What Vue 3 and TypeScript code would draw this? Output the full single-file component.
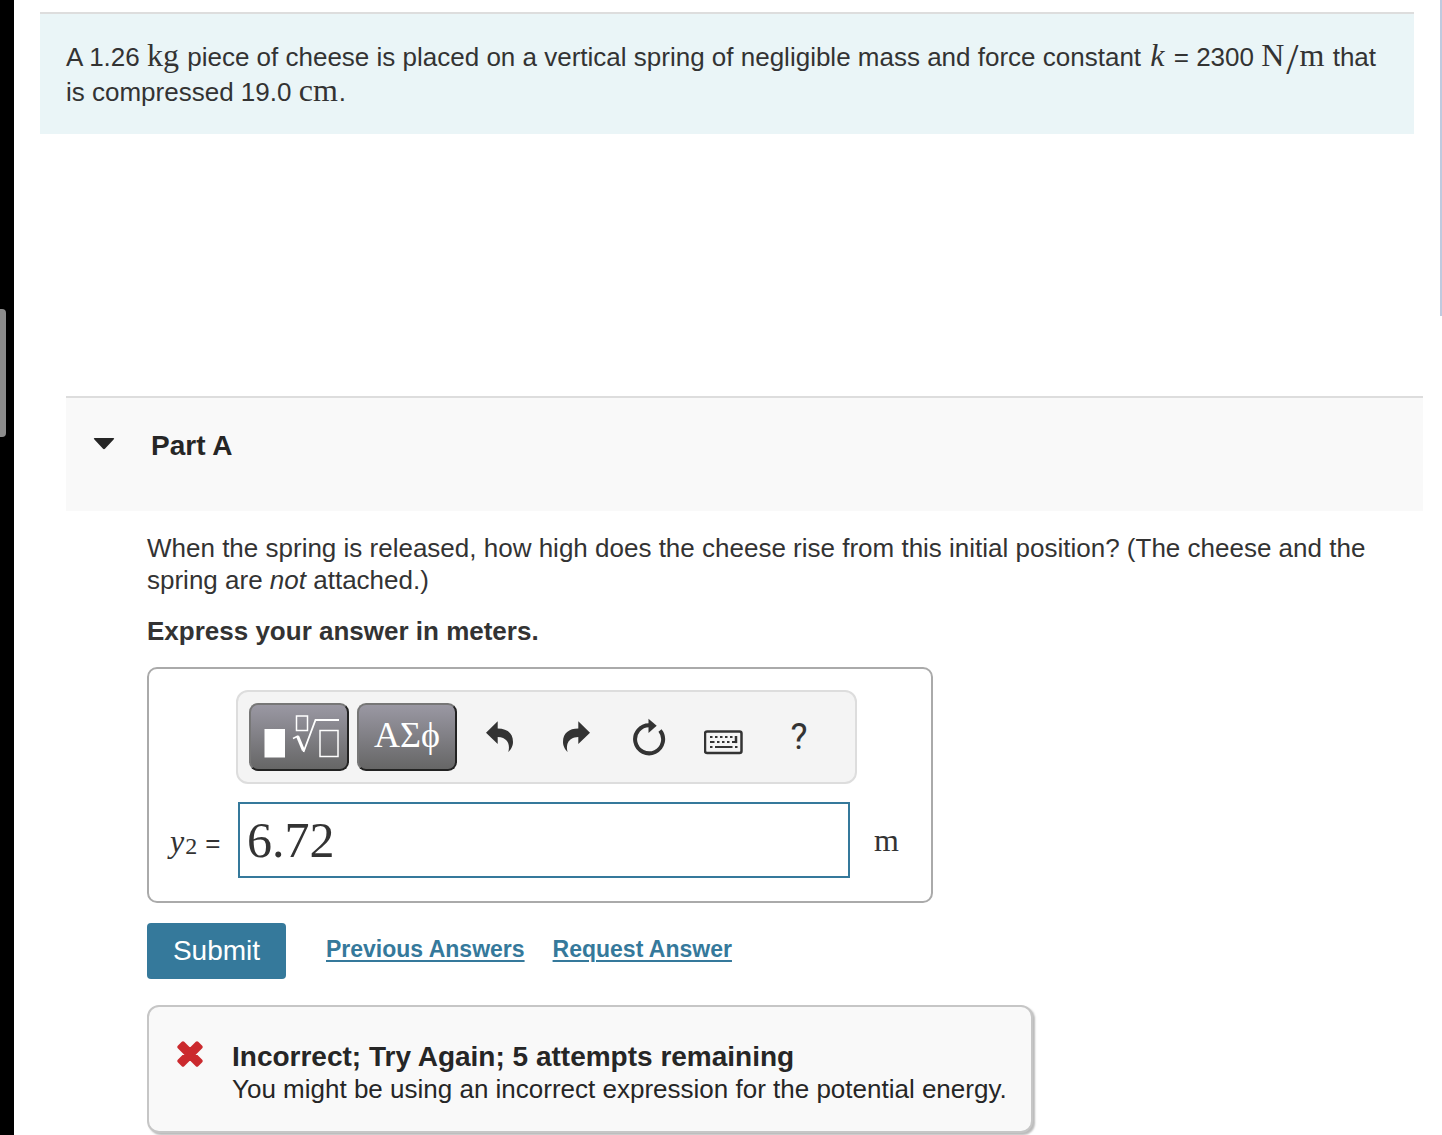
<script setup lang="ts">
import { ref } from 'vue'

const answer = ref('6.72')
const open = ref(true)
</script>

<template>
  <div class="shell">
    <div class="rail"><span class="thumb"></span></div>

    <main class="page">
      <section class="problem">
        <p>
          A 1.26 <span class="math">kg</span> piece of cheese is placed on a vertical spring of negligible mass and
          force constant <i class="math">k</i> = 2300 <span class="math">N<span class="slash">/</span>m</span> that is
          compressed 19.0 <span class="math">cm</span>.
        </p>
      </section>

      <section class="part">
        <header class="part-head">
          <button type="button" class="toggle" aria-label="Toggle Part A" :aria-expanded="open" @click="open = !open">
            <svg width="22" height="14" viewBox="0 0 22 14">
              <path d="M2 1H20Q22 1 20.600 2.400L12.200 11.600Q11 12.800 9.800 11.600L1.400 2.400Q0 1 2 1Z" fill="#262626" />
            </svg>
          </button>
          <h2>Part A</h2>
        </header>

        <div v-if="open" class="part-body">
          <p class="question">
            When the spring is released, how high does the cheese rise from this initial position? (The cheese and the
            spring are <em>not</em> attached.)
          </p>
          <p class="express">Express your answer in meters.</p>

          <form class="answer-box" @submit.prevent>
            <div class="toolbar">
              <button type="button" class="key" aria-label="Templates">
                <svg width="80" height="44" viewBox="0 0 80 44" fill="none" stroke="#fff">
                  <rect x="5.500" y="14" width="20.500" height="28.500" fill="#fff" stroke="none" />
                  <rect x="37.500" y="1" width="11" height="14.500" stroke-width="1.500" />
                  <path d="M34 23.500L39 21" stroke-width="1.500" />
                  <path d="M38.500 21L44.500 35.500" stroke-width="3.200" />
                  <path d="M44.500 37L56.500 5H80" stroke-width="1.800" />
                  <rect x="61" y="15.500" width="18" height="26" stroke-width="1.500" />
                </svg>
              </button>
              <button type="button" class="key greek">ΑΣϕ</button>
              <div class="tools">
                <button type="button" aria-label="Undo">
                  <svg width="40" height="40" viewBox="0 0 40 40">
                    <path d="M7 15.700L18.700 4.300V11.500C28 11.500 34 16 34 25C34 29.500 31.500 33 29.300 35C31 29 30 20.500 18.700 20V27Z" fill="#333" />
                  </svg>
                </button>
                <button type="button" aria-label="Redo">
                  <svg width="40" height="40" viewBox="0 0 40 40">
                    <path d="M36 15.700L24.300 4.300V11.500C15 11.500 9 16 9 25C9 29.500 11.500 33 13.700 35C12 29 13 20.500 24.300 20V27Z" fill="#333" />
                  </svg>
                </button>
                <button type="button" aria-label="Reset">
                  <svg width="40" height="40" viewBox="0 0 40 40">
                    <path d="M20.500 8.300A14 14 0 1 0 31 13.500" fill="none" stroke="#333" stroke-width="4" />
                    <path d="M19.500 1.700L27.700 8.700L19.500 16Z" fill="#333" />
                  </svg>
                </button>
                <button type="button" aria-label="Keyboard shortcuts">
                  <svg width="40" height="40" viewBox="0 0 40 40" fill="none" stroke="#333">
                    <rect x="1" y="14.500" width="36.500" height="21.500" rx="2" stroke-width="2.500" />
                    <path d="M6 20h2.500m2.500 0h2.500m2.500 0h2.500m2.500 0h2.500m2.500 0h2.500" stroke-width="2.200" />
                    <path d="M6 25h4.500m2.500 0h2.500m2.500 0h2.500m2.500 0h2.500m2.500 0h5" stroke-width="2.200" />
                    <path d="M32 19v7.100" stroke-width="2.500" />
                    <path d="M6 30h2.500m2.500 0h17.500m2.500 0h2.500" stroke-width="2.200" />
                  </svg>
                </button>
                <button type="button" class="help" aria-label="Help">?</button>
              </div>
            </div>

            <div class="entry">
              <label for="answer"><i>y</i><span class="index">2</span> <span class="equals">=</span></label>
              <input id="answer" v-model="answer" type="text" autocomplete="off" spellcheck="false" />
              <span class="unit">m</span>
            </div>
          </form>

          <div class="actions">
            <button type="button" class="submit">Submit</button>
            <a href="#previous">Previous Answers</a>
            <a href="#request">Request Answer</a>
          </div>

          <div class="feedback" role="status">
            <svg width="28" height="28" viewBox="0 0 28 28" aria-hidden="true">
              <path d="M3 7L7 3L14 10L21 3L25 7L18 14L25 21L21 25L14 18L7 25L3 21L10 14Z" fill="#cb2a2e" stroke="#cb2a2e" stroke-width="3.500" stroke-linejoin="round" />
            </svg>
            <div>
              <h3>Incorrect; Try Again; 5 attempts remaining</h3>
              <p>You might be using an incorrect expression for the potential energy.</p>
            </div>
          </div>
        </div>
      </section>
    </main>

    <div class="edge"></div>
  </div>
</template>

<style>
body {
  background: #fff;
}
</style>

<style scoped>
.shell {
  display: flex;
  min-height: 100vh;
  color: #333;
  font: 26px/32px "Liberation Sans", Arial, sans-serif;
}
p,
h2,
h3 {
  margin: 0;
}
button {
  display: flex;
  align-items: center;
  justify-content: center;
  box-sizing: border-box;
  padding: 0;
  border: 0;
  background: none;
  color: inherit;
}
.rail {
  flex: 0 0 14px;
  background: #000;
}
.thumb {
  display: block;
  width: 6px;
  height: 128px;
  margin-top: 309px;
  border-radius: 0 4px 4px 0;
  background: #8c8c8c;
}
.page {
  flex: 1;
  min-width: 0;
  padding-top: 12px;
}
.edge {
  flex: 0 0 2px;
  height: 316px;
  background: #bfcadf;
}
.problem {
  margin: 0 26px;
  padding: 26px 26px 24px;
  border-top: 2px solid #ddd;
  background: #eaf5f7;
  line-height: 35px;
}
.math {
  margin-right: 1px;
  font-family: "Liberation Serif", "Times New Roman", serif;
  font-size: 32px;
  line-height: 30px;
}
i.math {
  margin: 0 2px;
}
.slash {
  margin: 0 1px 0 2px;
  font-size: 44px;
  line-height: 20px;
  vertical-align: -8px;
}
.part {
  margin: 262px 17px 0 52px;
}
.part-head {
  display: flex;
  align-items: flex-start;
  gap: 36px;
  padding: 32px 27px 49px;
  border-top: 2px solid #ddd;
  background: #f9f9f9;
  color: #262626;
}
.toggle {
  height: 28px;
}
.part-head h2 {
  font-size: 28px;
  line-height: 32px;
}
.part-body {
  padding: 21px 32px 0 81px;
}
.express {
  margin-top: 19px;
  font-weight: bold;
}
.answer-box {
  box-sizing: border-box;
  width: 786px;
  max-width: 100%;
  margin-top: 20px;
  padding: 21px 0 23px;
  border: 2px solid #aaa;
  border-radius: 10px;
}
.toolbar {
  display: flex;
  align-items: center;
  gap: 8px;
  box-sizing: border-box;
  width: 621px;
  height: 94px;
  margin-left: 87px;
  padding: 0 11px;
  border: 2px solid #ddd;
  border-radius: 12px;
  background: #f4f4f4;
}
.key {
  width: 100px;
  height: 68px;
  border: 2px solid;
  border-color: #777 #222 #222 #777;
  border-radius: 9px;
  background: linear-gradient(#9a98a3, #666);
  color: #fff;
}
.key svg {
  flex: none;
}
.greek {
  padding-bottom: 4px;
  font: 36px/40px "Liberation Serif", serif;
}
.tools {
  display: flex;
  gap: 35px;
  margin-left: 14px;
}
.tools button {
  width: 40px;
  height: 40px;
}
.tools .help {
  font: 36px/40px Roboto, sans-serif;
}
.entry {
  display: flex;
  align-items: center;
  margin-top: 18px;
}
.entry label {
  width: 68px;
  padding: 2px 0 0 21px;
  font: 32px/40px "Liberation Serif", serif;
  white-space: nowrap;
}
.index {
  margin-left: 1px;
  font-size: 24px;
  line-height: 24px;
  vertical-align: -2px;
}
.equals {
  font: 26px/32px "Liberation Sans", sans-serif;
}
.entry input {
  box-sizing: border-box;
  width: 612px;
  height: 76px;
  padding: 0 7px;
  border: 2px solid #35799b;
  border-radius: 0;
  outline: 0;
  background: #fff;
  color: #333;
  font: 50px/72px "Liberation Serif", serif;
}
.unit {
  margin-left: 24px;
  font: 32px/40px "Liberation Serif", serif;
}
.actions {
  display: flex;
  align-items: center;
  gap: 28px;
  margin-top: 20px;
}
.submit {
  width: 139px;
  height: 56px;
  margin-right: 12px;
  border-radius: 4px;
  background: #35799b;
  color: #fff;
  font: 28px/32px "Liberation Sans", sans-serif;
}
.actions a {
  padding-bottom: 4px;
  color: #35799b;
  font-size: 23px;
  font-weight: bold;
  text-decoration-thickness: 2px;
  text-underline-offset: 3px;
}
.feedback {
  display: flex;
  gap: 28px;
  box-sizing: border-box;
  width: fit-content;
  margin-top: 26px;
  padding: 34px 24px 26px 27px;
  border: 2px solid #c6c6c6;
  border-radius: 12px;
  background: #f9f9f9;
  box-shadow: 2px 2px 2px #bbb;
  color: #262626;
}
.feedback svg {
  flex: none;
  margin-top: -1px;
}
.feedback h3 {
  font-size: 28px;
  line-height: 32px;
}
</style>
